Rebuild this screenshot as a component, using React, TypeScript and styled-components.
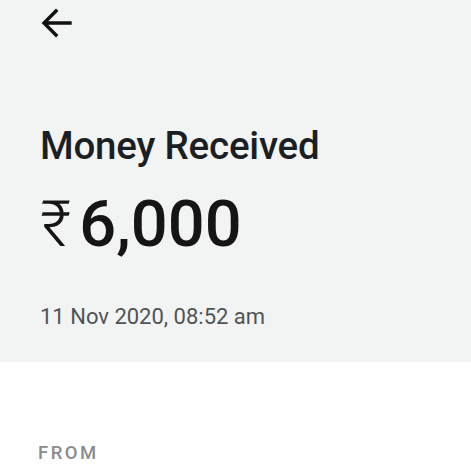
import React from 'react'
import styled, { createGlobalStyle } from 'styled-components'

const GlobalStyle = createGlobalStyle`
  html, body {
    margin: 0;
    padding: 0;
    background: #ffffff;
    font-family: Roboto, "Noto Sans", sans-serif;
  }
`

const Header = styled.div`
  background: #f2f3f3;
  padding: 7px 40px 0;
  height: 362px;
  box-sizing: border-box;
  display: flex;
  flex-direction: column;
`

const BackButton = styled.button`
  width: 36px;
  height: 32px;
  margin-left: 0;
  padding: 0;
  border: none;
  background: none;
  color: #111;
  display: flex;
  align-items: center;
`

const Title = styled.h1`
  margin: 88px 0 0;
  font-size: 38.5px;
  font-weight: 500;
  line-height: 1;
  color: #1b1f23;
  letter-spacing: -0.2px;
`

const Amount = styled.div`
  margin-top: 26px;
  display: flex;
  align-items: baseline;
  color: #151515;
  line-height: 1;
`

const Currency = styled.span`
  font-size: 64px;
  font-weight: 300;
  margin-right: 8px;
`

const Value = styled.span`
  font-size: 65px;
  font-weight: 500;
`

const Timestamp = styled.div`
  margin-top: 47px;
  font-size: 22px;
  color: #505356;
`

const Body = styled.div`
  padding: 80px 38px 0;
`

const Label = styled.div`
  font-size: 18.5px;
  font-weight: 500;
  letter-spacing: 2.5px;
  color: #8a8c8e;
`

const ArrowLeft = () => (
  <svg width="32" height="32" viewBox="0 0 32 32" fill="none" stroke="currentColor" strokeWidth="3.4" strokeLinecap="square">
    <path d="M30 16H5M16 4L4 16l12 12" />
  </svg>
)

export default function App() {
  return (
    <>
      <GlobalStyle />
      <Header>
        <BackButton aria-label="Back">
          <ArrowLeft />
        </BackButton>
        <Title>Money Received</Title>
        <Amount>
          <Currency>₹</Currency>
          <Value>6,000</Value>
        </Amount>
        <Timestamp>11 Nov 2020, 08:52 am</Timestamp>
      </Header>
      <Body>
        <Label>FROM</Label>
      </Body>
    </>
  )
}
